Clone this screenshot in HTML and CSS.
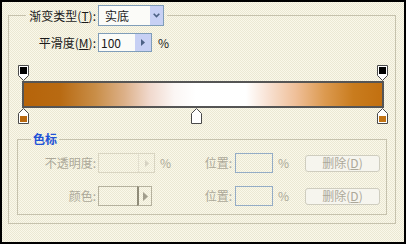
FILE: index.html
```html
<!DOCTYPE html>
<html lang="zh-CN">
<head>
    <meta charset="UTF-8">
    <title>渐变编辑器</title>
    <link rel="stylesheet" href="styles.css">
</head>
<body>
<div class="dialog">
    <fieldset class="grad-group">
        <legend>
            <div class="type-row">
                <label class="lbl type-lbl">渐变类型(<u>T</u>):</label>
                <div class="combo">
                    <span class="combo-val">实底</span>
                    <span class="combo-btn"><svg width="7" height="5" viewBox="0 0 7 5"><path d="M0.7 0.7 L3.5 3.6 L6.3 0.7" fill="none" stroke="#4d6185" stroke-width="1.6"/></svg></span>
                </div>
            </div>
        </legend>

        <div class="smooth-row">
            <label class="lbl smooth-lbl">平滑度(<u>M</u>):</label>
            <div class="spin">
                <span class="spin-val">100</span>
                <span class="spin-btn"><svg width="4" height="7" viewBox="0 0 4 7"><path d="M0 0 L4 3.5 L0 7 Z" fill="#4d6185"/></svg></span>
            </div>
            <span class="unit">%</span>
        </div>

        <div class="editor">
            <div class="stop-strip">
                <svg class="stop" style="left:0%" width="11" height="16" viewBox="0 0 11 16"><path d="M0.5 0.5H10.5V10.5L5.5 15.5L0.5 10.5Z" fill="#fff" stroke="#4a4a4a"/><rect x="2" y="2" width="7" height="7" fill="#000"/></svg>
                <svg class="stop" style="left:100%" width="11" height="16" viewBox="0 0 11 16"><path d="M0.5 0.5H10.5V10.5L5.5 15.5L0.5 10.5Z" fill="#fff" stroke="#4a4a4a"/><rect x="2" y="2" width="7" height="7" fill="#000"/></svg>
            </div>
            <div class="grad-bar"></div>
            <div class="stop-strip">
                <svg class="stop" style="left:0%" width="11" height="16" viewBox="0 0 11 16"><path d="M5.5 0.5L10.5 5.5V15.5H0.5V5.5Z" fill="#fff" stroke="#4a4a4a"/><rect x="2" y="8" width="7" height="6" fill="#b8680e"/></svg>
                <svg class="stop" style="left:48.2%" width="11" height="16" viewBox="0 0 11 16"><path d="M5.5 0.5L10.5 5.5V15.5H0.5V5.5Z" fill="#fff" stroke="#4a4a4a"/></svg>
                <svg class="stop" style="left:100%" width="11" height="16" viewBox="0 0 11 16"><path d="M5.5 0.5L10.5 5.5V15.5H0.5V5.5Z" fill="#fff" stroke="#4a4a4a"/><rect x="2" y="8" width="7" height="6" fill="#c27414"/></svg>
            </div>
        </div>

        <fieldset class="stop-group">
            <legend>色标</legend>
            <div class="stop-grid">
                <span class="lbl dim col-a">不透明度:</span>
                <div class="spin spin-off">
                    <span class="spin-val"></span>
                    <span class="spin-btn"><svg width="4" height="7" viewBox="0 0 4 7"><path d="M0 0 L4 3.5 L0 7 Z" fill="#d6d2c2"/></svg></span>
                </div>
                <span class="unit dim">%</span>
                <span class="lbl dim col-b">位置:</span>
                <div class="pos-box"></div>
                <span class="unit dim">%</span>
                <button class="btn" disabled>删除(<u>D</u>)</button>

                <span class="lbl dim col-a">颜色:</span>
                <div class="color-pick">
                    <span class="swatch"></span>
                    <span class="pick-btn"><svg width="5" height="9" viewBox="0 0 5 9"><path d="M0 0 L5 4.5 L0 9 Z" fill="#a19d8c"/></svg></span>
                </div>
                <span></span>
                <span class="lbl dim col-b">位置:</span>
                <div class="pos-box"></div>
                <span class="unit dim">%</span>
                <button class="btn" disabled>删除(<u>D</u>)</button>
            </div>
        </fieldset>
    </fieldset>
</div>
</body>
</html>
```

FILE: styles.css
```css
* {
  box-sizing: border-box;
}

html, body {
  margin: 0;
}

body {
  font-family: "Noto Sans CJK SC", "Noto Sans", sans-serif;
  font-size: 12px;
  line-height: 14px;
  color: #1a1a1a;
}

/* dialog frame with the dithered cream fill */
.dialog {
  width: 406px;
  height: 244px;
  border: 2px solid #000;
  padding: 3px 0 0 6px;
  background: repeating-conic-gradient(#faf8ea 0 25%, #ebe8d3 0 50%) 0 0 / 2px 2px;
}

fieldset {
  margin: 0;
  min-width: 0;
}

.grad-group {
  width: 388px;
  height: 219px;
  border: 1px solid #c6c2ad;
  padding: 7px 11px 0 13px;
}

.grad-group > legend {
  padding: 0 3px 0 0;
  margin-left: 4px;
}

.type-row {
  display: flex;
  align-items: center;
  height: 21px;
}

.lbl {
  text-align: right;
  white-space: nowrap;
}

.type-lbl {
  width: 70px;
  margin-right: 2px;
}

.combo {
  display: flex;
  width: 66px;
  height: 21px;
  border: 1px solid #7f9db9;
  background: #fbfbf8;
}

.combo-val {
  flex: 1;
  display: flex;
  align-items: center;
  padding-left: 6px;
}

.combo-btn {
  width: 13px;
  display: flex;
  align-items: center;
  justify-content: center;
  background: #c7d0f4;
}

/* smoothness row */
.smooth-row {
  display: flex;
  align-items: center;
  height: 19px;
}

.smooth-lbl {
  width: 74px;
  margin-right: 2px;
}

.spin {
  display: flex;
  width: 54px;
  height: 19px;
  border: 1px solid #7f9db9;
  background: #fbfbf8;
}

.spin-val {
  flex: 1;
  display: flex;
  align-items: center;
  padding-left: 2px;
}

.spin-btn {
  width: 16px;
  display: flex;
  align-items: center;
  justify-content: center;
  background: #c7d0f4;
}

.unit {
  margin-left: 6px;
}

/* gradient bar and its stops */
.editor {
  margin-top: 13px;
}

.stop-strip {
  position: relative;
  height: 16px;
  margin: 0 2px 0 1px;
}

.stop {
  position: absolute;
  top: 0;
  margin-left: -5px;
  display: block;
}

.grad-bar {
  height: 27px;
  border: 2px solid #555;
  background: linear-gradient(to right,
    #b6640a 0%, #b86a12 10%, #c98e48 20%, #dcb088 28%, #f0d8cc 35%,
    #fbf6f4 42%, #ffffff 48%, #ffffff 62%, #f8e2d4 68%, #efbf98 76%,
    #dc9a50 84%, #c97c1e 92%, #c27010 100%);
}

/* colour stop group */
.stop-group {
  margin: 8px -3px 0 -5px;
  height: 83px;
  border: 1px solid #c6c2ad;
  padding: 7px 0 0;
}

.stop-group > legend {
  margin-left: 13px;
  padding: 0 2px;
  color: #2152d6;
  font-weight: bold;
}

.stop-grid {
  display: grid;
  grid-template-columns: 80px 57px 15px 65px 38px 32px 75px;
  grid-template-rows: 20px 20px;
  row-gap: 13px;
  align-items: center;
}

.col-a {
  padding-right: 2px;
}

.col-b {
  padding-right: 3px;
}

.dim {
  color: #aca899;
}

.stop-grid .unit {
  margin-left: 0;
  padding-left: 5px;
}

.spin-off {
  width: 57px;
  height: 20px;
  border-color: #d9d5c2;
  background: transparent;
}

.spin-off .spin-btn {
  background: transparent;
  border-left: 1px solid #e2dfcf;
}

.pos-box {
  height: 20px;
  border: 1px solid #94acc6;
}

.btn {
  width: 75px;
  height: 17px;
  padding: 0;
  border: 1px solid #cfcdbf;
  border-radius: 3px;
  background: #f6f5ee;
  color: #aca899;
  font: inherit;
  line-height: 14px;
}

.color-pick {
  display: flex;
  width: 54px;
  height: 20px;
}

.swatch {
  width: 39px;
  border: 1px solid #b5b19e;
  border-right: none;
}

.pick-btn {
  flex: 1;
  display: flex;
  align-items: center;
  justify-content: center;
  border: 1px solid #b5b19e;
  border-left: 2px solid #8f8b78;
}
```
